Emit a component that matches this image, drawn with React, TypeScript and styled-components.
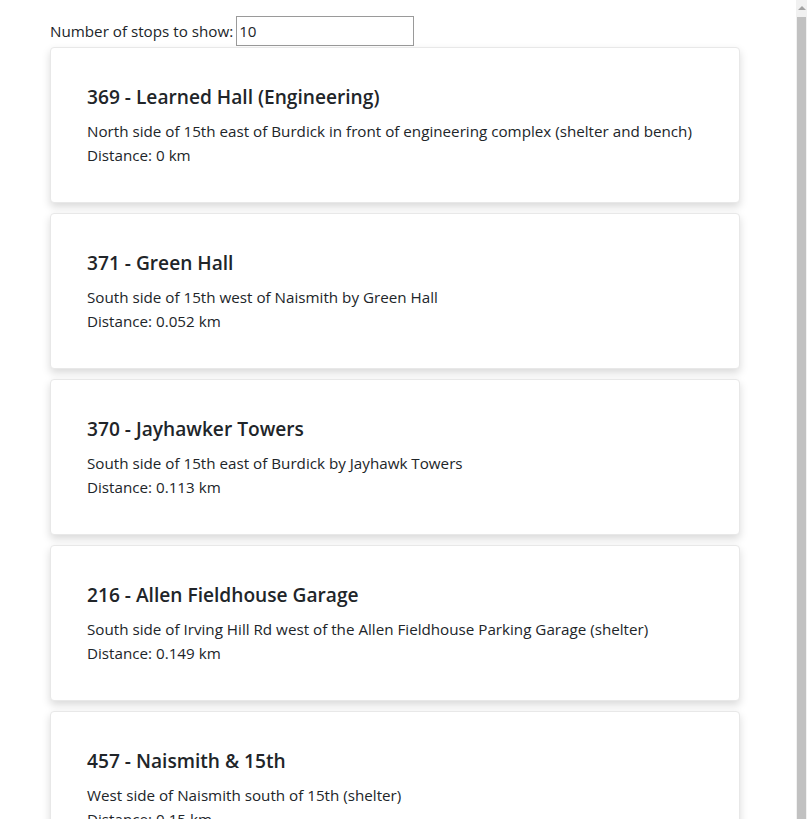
import React from "react";
import styled, { createGlobalStyle } from "styled-components";

const Global = createGlobalStyle`
  html, body { margin: 0; padding: 0; background: #fff; overflow: hidden; height: 819px; }
  body { font-family: "Open Sans", "Noto Sans", sans-serif; color: #212529; }
`;

const Page = styled.div`
  padding: 16px 0 0 50px;
  width: 690px;
`;

const Controls = styled.label`
  display: flex;
  align-items: center;
  gap: 3px;
  font-size: 15.2px;
  line-height: 24px;
  height: 30px;
  margin-bottom: 1px;
`;

const NumberInput = styled.input`
  box-sizing: border-box;
  width: 178px;
  height: 30px;
  border: 1px solid #9a9a9a;
  border-radius: 0;
  padding: 0 2px;
  font-family: "Open Sans", "Noto Sans", sans-serif;
  font-size: 15.2px;
  color: #212529;
  outline: none;
`;

const List = styled.div`
  display: flex;
  flex-direction: column;
  gap: 10px;
`;

const Card = styled.div`
  box-sizing: border-box;
  height: 156px;
  padding: 37px 36px 36px;
  background: #fff;
  border: 1px solid #e8e8e8;
  border-radius: 4px;
  box-shadow: 0 4px 8px 0 rgba(0, 0, 0, 0.15);
`;

const Title = styled.h4`
  margin: 0 0 10px;
  font-size: 19.15px;
  font-weight: 600;
  line-height: 24px;
  color: #212529;
`;

const Text = styled.p`
  margin: 0;
  font-size: 15.2px;
  line-height: 24px;
`;

const Scrollbar = styled.div`
  position: fixed;
  top: 0;
  right: 0;
  width: 11px;
  height: 819px;
  background: #f1f1f1;
  display: flex;
  flex-direction: column;
  align-items: center;
`;

const Arrow = styled.div`
  margin-top: 6px;
  width: 0;
  height: 0;
  border-left: 4px solid transparent;
  border-right: 4px solid transparent;
  border-bottom: 4px solid #a3a3a3;
`;

const Thumb = styled.div`
  margin-top: 7px;
  width: 9px;
  flex: 1;
  background: #c1c1c1;
`;

const stops = [
  { id: 369, name: "Learned Hall (Engineering)", desc: "North side of 15th east of Burdick in front of engineering complex (shelter and bench)", dist: "0" },
  { id: 371, name: "Green Hall", desc: "South side of 15th west of Naismith by Green Hall", dist: "0.052" },
  { id: 370, name: "Jayhawker Towers", desc: "South side of 15th east of Burdick by Jayhawk Towers", dist: "0.113" },
  { id: 216, name: "Allen Fieldhouse Garage", desc: "South side of Irving Hill Rd west of the Allen Fieldhouse Parking Garage (shelter)", dist: "0.149" },
  { id: 457, name: "Naismith & 15th", desc: "West side of Naismith south of 15th (shelter)", dist: "0.15" },
];

export default function App() {
  return (
    <>
      <Global />
      <Page>
        <Controls>
          Number of stops to show:
          <NumberInput type="text" defaultValue="10" />
        </Controls>
        <List>
          {stops.map((s) => (
            <Card key={s.id}>
              <Title>
                {s.id} - {s.name}
              </Title>
              <Text>{s.desc}</Text>
              <Text>Distance: {s.dist} km</Text>
            </Card>
          ))}
        </List>
      </Page>
      <Scrollbar>
        <Arrow />
        <Thumb />
      </Scrollbar>
    </>
  );
}
